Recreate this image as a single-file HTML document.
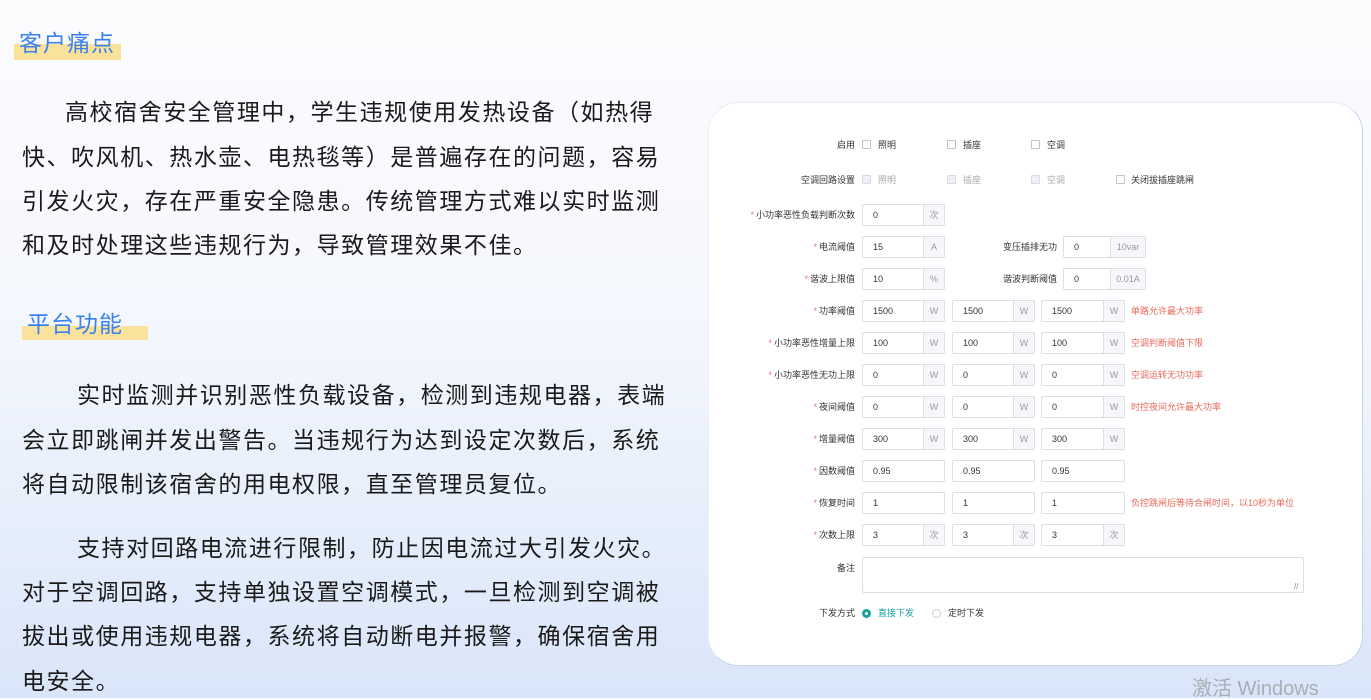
<!DOCTYPE html>
<html><head><meta charset="utf-8"><style>
*{margin:0;padding:0;box-sizing:border-box}
body{width:1371px;height:698px;overflow:hidden;position:relative;background:linear-gradient(180deg,#fcfcfe 0%,#f4f7fd 45%,#e6eefb 75%,#d9e5f9 100%);font-family:"Liberation Sans","Noto Sans CJK SC",sans-serif}
.t{position:absolute;font-size:23px;color:#1a1a1a;white-space:nowrap;letter-spacing:1.55px;line-height:30px}
.h{position:absolute;font-size:23px;color:#3b82f0;white-space:nowrap;letter-spacing:1px}
.hl{position:absolute;background:#fbe29a}
.card{position:absolute;left:708px;top:102px;width:655px;height:564px;background:#fff;border-radius:30px;border:1px solid #c8d3e6;border-left-color:#eef1f7;border-top-color:#e6ebf3}
.f{position:absolute;font-size:9px;white-space:nowrap;line-height:12px}
.lb{color:#333;text-align:right;width:140px}
.lb i{color:#f56c6c;font-style:normal;margin-right:2px}
.in{position:absolute;height:22px;border:1px solid #dcdfe6;border-radius:2px;background:#fff;font-size:9px;color:#333;line-height:20px;padding-left:10px}
.ad{position:absolute;right:0;top:0;bottom:0;background:#f5f7fa;border-left:1px solid #dcdfe6;color:#999;text-align:center;line-height:20px}
.cb{position:absolute;width:9px;height:9px;border:1px solid #c0c4cc;border-radius:1px;background:#fff}
.cb.d{background:#eef0f5;border-color:#d8dbe2}
.red{color:#e8685c}
</style></head><body>
<div class="hl" style="left:14px;top:44px;width:107px;height:16px"></div>
<div class="h" style="left:19px;top:24px">客户痛点</div>
<div class="t" style="left:65px;top:97px">高校宿舍安全管理中，学生违规使用发热设备（如热得</div>
<div class="t" style="left:22px;top:142px">快、吹风机、热水壶、电热毯等）是普遍存在的问题，容易</div>
<div class="t" style="left:22px;top:186px">引发火灾，存在严重安全隐患。传统管理方式难以实时监测</div>
<div class="t" style="left:22px;top:230px">和及时处理这些违规行为，导致管理效果不佳。</div>
<div class="hl" style="left:22px;top:326px;width:126px;height:14px"></div>
<div class="h" style="left:27px;top:305px">平台功能</div>
<div class="t" style="left:77px;top:380px">实时监测并识别恶性负载设备，检测到违规电器，表端</div>
<div class="t" style="left:22px;top:425px">会立即跳闸并发出警告。当违规行为达到设定次数后，系统</div>
<div class="t" style="left:22px;top:469px">将自动限制该宿舍的用电权限，直至管理员复位。</div>
<div class="t" style="left:77px;top:533px">支持对回路电流进行限制，防止因电流过大引发火灾。</div>
<div class="t" style="left:22px;top:577px">对于空调回路，支持单独设置空调模式，一旦检测到空调被</div>
<div class="t" style="left:22px;top:621px">拔出或使用违规电器，系统将自动断电并报警，确保宿舍用</div>
<div class="t" style="left:22px;top:666px">电安全。</div>
<div class="card"></div>
<div class="f" style="left:1192px;top:678px;font-size:20px;color:#a9adb5;line-height:22px">激活 Windows</div>

<div class="f lb" style="left:715px;top:139px">启用</div>
<div class="cb" style="left:862px;top:140px"></div><div class="f" style="left:878px;top:139px;color:#333">照明</div>
<div class="cb" style="left:947px;top:140px"></div><div class="f" style="left:963px;top:139px;color:#333">插座</div>
<div class="cb" style="left:1031px;top:140px"></div><div class="f" style="left:1047px;top:139px;color:#333">空调</div>

<div class="f lb" style="left:715px;top:174px">空调回路设置</div>
<div class="cb d" style="left:862px;top:175px"></div><div class="f" style="left:878px;top:174px;color:#aaa">照明</div>
<div class="cb d" style="left:947px;top:175px"></div><div class="f" style="left:963px;top:174px;color:#aaa">插座</div>
<div class="cb d" style="left:1031px;top:175px"></div><div class="f" style="left:1047px;top:174px;color:#aaa">空调</div>
<div class="cb" style="left:1116px;top:175px"></div><div class="f" style="left:1131px;top:174px;color:#333">关闭拔插座跳闸</div>

<div class="f lb" style="left:715px;top:209px"><i>*</i>小功率恶性负载判断次数</div>
<div class="in" style="left:862px;top:204px;width:83px">0<div class="ad" style="width:21px">次</div></div>

<div class="f lb" style="left:715px;top:241px"><i>*</i>电流阈值</div>
<div class="in" style="left:862px;top:236px;width:83px">15<div class="ad" style="width:21px">A</div></div>
<div class="f" style="left:1003px;top:241px;color:#333">变压插排无功</div>
<div class="in" style="left:1063px;top:236px;width:83px">0<div class="ad" style="width:35px">10var</div></div>

<div class="f lb" style="left:715px;top:273px"><i>*</i>谐波上限值</div>
<div class="in" style="left:862px;top:268px;width:83px">10<div class="ad" style="width:21px">%</div></div>
<div class="f" style="left:1003px;top:273px;color:#333">谐波判断阈值</div>
<div class="in" style="left:1063px;top:268px;width:83px">0<div class="ad" style="width:35px">0.01A</div></div>

<div class="f lb" style="left:715px;top:305px"><i>*</i>功率阈值</div>
<div class="in" style="left:862px;top:300px;width:83px">1500<div class="ad" style="width:21px">W</div></div>
<div class="in" style="left:952px;top:300px;width:83px">1500<div class="ad" style="width:21px">W</div></div>
<div class="in" style="left:1041px;top:300px;width:84px">1500<div class="ad" style="width:21px">W</div></div>
<div class="f red" style="left:1131px;top:305px">单路允许最大功率</div>

<div class="f lb" style="left:715px;top:337px"><i>*</i>小功率恶性增量上限</div>
<div class="in" style="left:862px;top:332px;width:83px">100<div class="ad" style="width:21px">W</div></div>
<div class="in" style="left:952px;top:332px;width:83px">100<div class="ad" style="width:21px">W</div></div>
<div class="in" style="left:1041px;top:332px;width:84px">100<div class="ad" style="width:21px">W</div></div>
<div class="f red" style="left:1131px;top:337px">空调判断阈值下限</div>

<div class="f lb" style="left:715px;top:369px"><i>*</i>小功率恶性无功上限</div>
<div class="in" style="left:862px;top:364px;width:83px">0<div class="ad" style="width:21px">W</div></div>
<div class="in" style="left:952px;top:364px;width:83px">0<div class="ad" style="width:21px">W</div></div>
<div class="in" style="left:1041px;top:364px;width:84px">0<div class="ad" style="width:21px">W</div></div>
<div class="f red" style="left:1131px;top:369px">空调运转无功功率</div>

<div class="f lb" style="left:715px;top:401px"><i>*</i>夜间阈值</div>
<div class="in" style="left:862px;top:396px;width:83px">0<div class="ad" style="width:21px">W</div></div>
<div class="in" style="left:952px;top:396px;width:83px">0<div class="ad" style="width:21px">W</div></div>
<div class="in" style="left:1041px;top:396px;width:84px">0<div class="ad" style="width:21px">W</div></div>
<div class="f red" style="left:1131px;top:401px">时控夜间允许最大功率</div>

<div class="f lb" style="left:715px;top:433px"><i>*</i>增量阈值</div>
<div class="in" style="left:862px;top:428px;width:83px">300<div class="ad" style="width:21px">W</div></div>
<div class="in" style="left:952px;top:428px;width:83px">300<div class="ad" style="width:21px">W</div></div>
<div class="in" style="left:1041px;top:428px;width:84px">300<div class="ad" style="width:21px">W</div></div>

<div class="f lb" style="left:715px;top:465px"><i>*</i>因数阈值</div>
<div class="in" style="left:862px;top:460px;width:83px">0.95</div>
<div class="in" style="left:952px;top:460px;width:83px">0.95</div>
<div class="in" style="left:1041px;top:460px;width:84px">0.95</div>

<div class="f lb" style="left:715px;top:497px"><i>*</i>恢复时间</div>
<div class="in" style="left:862px;top:492px;width:83px">1</div>
<div class="in" style="left:952px;top:492px;width:83px">1</div>
<div class="in" style="left:1041px;top:492px;width:84px">1</div>
<div class="f red" style="left:1131px;top:497px">负控跳闸后等待合闸时间，以10秒为单位</div>

<div class="f lb" style="left:715px;top:529px"><i>*</i>次数上限</div>
<div class="in" style="left:862px;top:524px;width:83px">3<div class="ad" style="width:21px">次</div></div>
<div class="in" style="left:952px;top:524px;width:83px">3<div class="ad" style="width:21px">次</div></div>
<div class="in" style="left:1041px;top:524px;width:84px">3<div class="ad" style="width:21px">次</div></div>

<div class="f lb" style="left:715px;top:562px">备注</div>
<div class="in" style="left:862px;top:557px;width:442px;height:36px"></div>
<div class="f" style="left:1294px;top:581px;color:#888;font-size:8px">//</div>

<div class="f lb" style="left:715px;top:607px">下发方式</div>
<div style="position:absolute;left:862px;top:609px;width:9px;height:9px;border-radius:50%;background:#17a2a0;border:1px solid #17a2a0"><div style="position:absolute;left:2px;top:2px;width:3px;height:3px;border-radius:50%;background:#fff"></div></div>
<div class="f" style="left:878px;top:607px;color:#17a2a0">直接下发</div>
<div style="position:absolute;left:932px;top:609px;width:9px;height:9px;border-radius:50%;border:1px solid #ccc;background:#fff"></div>
<div class="f" style="left:948px;top:607px;color:#333">定时下发</div>
</body></html>
